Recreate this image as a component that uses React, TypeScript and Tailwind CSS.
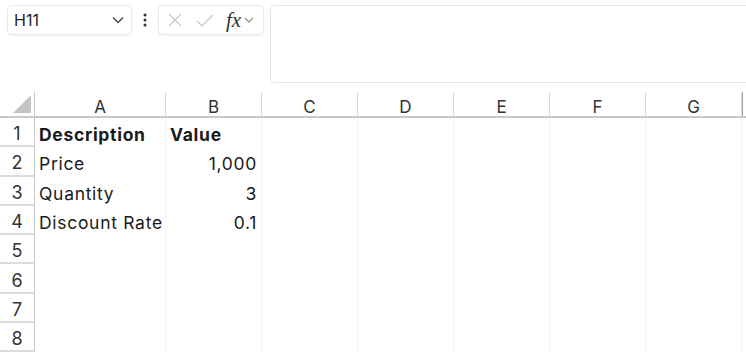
import React from 'react';

const cols = ['A', 'B', 'C', 'D', 'E', 'F', 'G'];
const widths = [131, 96, 96, 96, 96, 96, 96];

const rows: { a: string; b: string; bold?: boolean }[] = [
  { a: 'Description', b: 'Value', bold: true },
  { a: 'Price', b: '1,000' },
  { a: 'Quantity', b: '3' },
  { a: 'Discount Rate', b: '0.1' },
  { a: '', b: '' },
  { a: '', b: '' },
  { a: '', b: '' },
  { a: '', b: '' },
];

const FormulaBar: React.FC = () => (
  <div className="flex h-[92px] items-start bg-white pt-[5px] pl-[7px]">
    <div className="flex h-[30px] w-[125px] items-center justify-between rounded-[4px] border border-[#e6e8ea] pl-[6px] pr-[7px] shadow-[0_1px_2px_rgba(0,0,0,0.05)]">
      <span className="text-[16px] text-[#242424]">H11</span>
      <svg width="12" height="8" viewBox="0 0 12 8" fill="none" stroke="#444" strokeWidth="1.3">
        <path d="M1 1.5 L6 6.5 L11 1.5" />
      </svg>
    </div>
    <div className="flex h-[30px] w-[26px] items-center justify-center">
      <svg width="4" height="14" viewBox="0 0 4 14" fill="#333">
        <circle cx="2" cy="2" r="1.5" />
        <circle cx="2" cy="7" r="1.5" />
        <circle cx="2" cy="12" r="1.5" />
      </svg>
    </div>
    <div className="flex h-[30px] w-[106px] items-center rounded-[4px] border border-[#e6e8ea] pl-[9px] shadow-[0_1px_2px_rgba(0,0,0,0.05)]">
      <svg width="14" height="14" viewBox="0 0 14 14" fill="none" stroke="#c8c8c8" strokeWidth="1.2">
        <path d="M1 1 L13 13 M13 1 L1 13" />
      </svg>
      <svg className="ml-[14px]" width="18" height="13" viewBox="0 0 18 13" fill="none" stroke="#c8c8c8" strokeWidth="1.2">
        <path d="M1 7 L6 12 L17 1" />
      </svg>
      <span className="ml-[12px] text-[21px] leading-none italic text-[#333]" style={{ fontFamily: '"Liberation Serif", serif' }}>
        fx
      </span>
      <svg className="ml-[3px]" width="10" height="6" viewBox="0 0 10 6" fill="none" stroke="#888" strokeWidth="1.1">
        <path d="M1 1 L5 5 L9 1" />
      </svg>
    </div>
    <div className="ml-[6px] h-[78px] flex-1 rounded-l-[5px] border border-r-0 border-[#e3e5e7]" />
  </div>
);

const App: React.FC = () => {
  return (
    <div
      className="h-[356px] w-[746px] overflow-hidden bg-white text-[#1a1a1a]"
      style={{ fontFamily: 'Inter, "Noto Sans", sans-serif' }}
    >
      <FormulaBar />
      {/* column headers */}
      <div className="flex h-[26px] border-b-2 border-[#c9c9c9]">
        <div className="relative w-[35px] shrink-0 border-r border-[#c9c9c9]">
          <svg className="absolute bottom-[3px] right-[3px]" width="18" height="18" viewBox="0 0 18 18">
            <path d="M18 0 L18 18 L0 18 Z" fill="#c4c4c4" />
          </svg>
        </div>
        {cols.map((c, i) => (
          <div
            key={c}
            className="flex shrink-0 items-center justify-center border-r border-[#dadada] pt-[7px] text-[17px] text-[#333]"
            style={{ width: widths[i] }}
          >
            {c}
          </div>
        ))}
        <div className="flex-1 border-l border-[#a0a0a0]" />
      </div>
      {rows.map((r, i) => (
        <div key={i} className="flex h-[29.3px] text-[17.5px] tracking-[0.7px]">
          <div className="flex w-[35px] shrink-0 items-center justify-center border-r border-b-2 border-r-[#c9c9c9] border-b-[#dcdcdc] pt-[4px] text-[18px] tracking-normal text-[#333]">
            {i + 1}
          </div>
          <div
            className={`flex w-[131px] shrink-0 items-center border-r border-[#f6f6f6] pt-[5px] pl-[4px] ${r.bold ? 'font-bold' : ''}`}
          >
            {r.a}
          </div>
          <div
            className={`flex w-[96px] shrink-0 items-center border-r border-[#f6f6f6] pt-[5px] pr-[4px] ${r.bold ? 'justify-start pl-[4px] font-bold' : 'justify-end'}`}
          >
            {r.b}
          </div>
          {widths.slice(2).map((w, j) => (
            <div key={j} className="shrink-0 border-r border-[#f6f6f6]" style={{ width: w }} />
          ))}
        </div>
      ))}
    </div>
  );
};

export default App;
